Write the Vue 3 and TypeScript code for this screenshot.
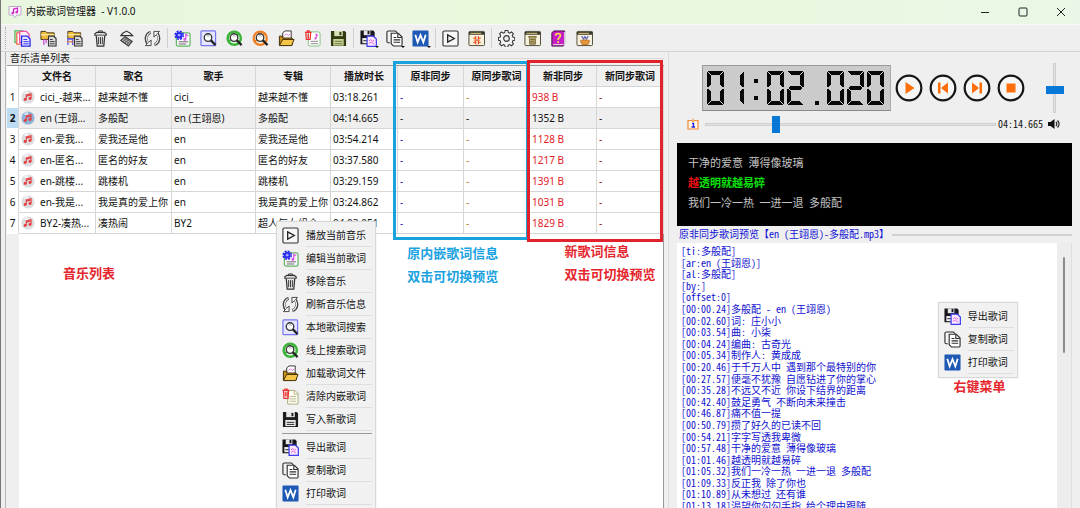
<script setup lang="ts">
import { ref } from 'vue'

interface Track {
  file: string
  title: string
  singer: string
  album: string
  duration: string
  size: string
}
interface Tool { icon: string; label: string; gap?: boolean }

const tools: Tool[] = [
  { icon: 'docs', label: '添加音乐' },
  { icon: 'folder-pink', label: '添加目录' },
  { icon: 'folder-blue', label: '添加多级目录' },
  { icon: 'trash', label: '移除音乐' },
  { icon: 'sweep', label: '清空列表' },
  { icon: 'refresh', label: '刷新音乐信息' },
  { icon: 'edit', label: '编辑当前歌词', gap: true },
  { icon: 'find-local', label: '本地歌词搜索' },
  { icon: 'find-green', label: '线上搜索歌词' },
  { icon: 'find-orange', label: '批量搜索歌词' },
  { icon: 'open', label: '加载歌词文件' },
  { icon: 'clear', label: '清除内嵌歌词' },
  { icon: 'save-olive', label: '写入新歌词' },
  { icon: 'export', label: '导出歌词', gap: true },
  { icon: 'copy', label: '复制歌词' },
  { icon: 'word', label: '打印歌词' },
  { icon: 'play-box', label: '播放当前音乐', gap: true },
  { icon: 'win-split', label: '布局' },
  { icon: 'gear', label: '设置', gap: true },
  { icon: 'win-log', label: '日志' },
  { icon: 'help', label: '帮助' },
  { icon: 'win-about', label: '关于' },
]
const dropdowns = ['export', 'copy', 'word']

const headers = ['文件名', '歌名', '歌手', '专辑', '播放时长', '原非同步', '原同步歌词', '新非同步', '新同步歌词']

const tracks: Track[] = [
  { file: 'cici_-越来...', title: '越来越不懂', singer: 'cici_', album: '越来越不懂', duration: '03:18.261', size: '938 B' },
  { file: 'en (王翊...', title: '多般配', singer: 'en (王翊恩)', album: '多般配', duration: '04:14.665', size: '1352 B' },
  { file: 'en-爱我...', title: '爱我还是他', singer: 'en', album: '爱我还是他', duration: '03:54.214', size: '1128 B' },
  { file: 'en-匿名...', title: '匿名的好友', singer: 'en', album: '匿名的好友', duration: '03:37.580', size: '1217 B' },
  { file: 'en-跳楼...', title: '跳楼机', singer: 'en', album: '跳楼机', duration: '03:29.159', size: '1391 B' },
  { file: 'en-我是...', title: '我是真的爱上你', singer: 'en', album: '我是真的爱上你', duration: '03:24.862', size: '1031 B' },
  { file: 'BY2-凑热...', title: '凑热闹', singer: 'BY2', album: '超人气女组合', duration: '04:03.051', size: '1829 B' },
]
const selected = ref(1)

const songMenu = [
  { icon: 'play-box', label: '播放当前音乐' },
  { icon: 'edit', label: '编辑当前歌词' },
  { icon: 'trash', label: '移除音乐' },
  { icon: 'refresh', label: '刷新音乐信息' },
  { icon: 'find-local', label: '本地歌词搜索' },
  { icon: 'find-green', label: '线上搜索歌词' },
  { icon: 'open', label: '加载歌词文件' },
  { icon: 'clear-doc', label: '清除内嵌歌词' },
  { icon: 'save', label: '写入新歌词' },
]
const lyricMenu = [
  { icon: 'export', label: '导出歌词' },
  { icon: 'copy', label: '复制歌词' },
  { icon: 'word', label: '打印歌词' },
]

const controls = [
  { icon: 'c-play', label: '播放' },
  { icon: 'c-prev', label: '上一首' },
  { icon: 'c-next', label: '下一首' },
  { icon: 'c-stop', label: '停止' },
]

/* Bars of a seven-segment cell, 17 x 34 units: [x, y, width, height] */
type Bar = [number, number, number, number]
const segments: Record<string, Bar[]> = {
  a: [[1, 0, 15, 1], [2, 1, 13, 1], [3, 2, 11, 1], [4, 3, 9, 1]],
  b: [[16, 1, 1, 15], [15, 2, 1, 14], [14, 3, 1, 12], [13, 4, 1, 10]],
  c: [[16, 18, 1, 15], [15, 18, 1, 14], [14, 19, 1, 12], [13, 20, 1, 10]],
  d: [[1, 33, 15, 1], [2, 32, 13, 1], [3, 31, 11, 1], [4, 30, 9, 1]],
  e: [[0, 18, 1, 15], [1, 18, 1, 14], [2, 19, 1, 12], [3, 20, 1, 10]],
  f: [[0, 1, 1, 15], [1, 2, 1, 14], [2, 3, 1, 12], [3, 4, 1, 10]],
  g: [[3, 15, 11, 1], [2, 16, 13, 2], [3, 18, 11, 1]],
}
const lit: Record<string, string> = { '0': 'abcdef', '1': 'bc', '2': 'abdeg' }
const clock = '01:02.020'
function bars(ch: string): Bar[] {
  if (ch === ':') return [[7, 8, 4, 4], [7, 25, 4, 4]]
  if (ch === '.') return [[8, 30, 4, 4]]
  return [...(lit[ch] ?? '')].flatMap((s) => segments[s])
}

const position = ref(60)
const volume = ref(46)

const lyrics = ref(`[ti:多般配]
[ar:en (王翊恩)]
[al:多般配]
[by:]
[offset:0]
[00:00.24]多般配 - en (王翊恩)
[00:02.60]词: 庄小小
[00:03.54]曲: 小柒
[00:04.24]编曲: 古奇光
[00:05.34]制作人: 黄成成
[00:20.46]于千万人中 遇到那个最特别的你
[00:27.57]便毫不犹豫 自愿钻进了你的掌心
[00:35.28]不远又不近 你设下结界的距离
[00:42.40]鼓足勇气 不断向未来撞击
[00:46.87]痛不值一提
[00:50.79]攒了好久的已读不回
[00:54.21]字字写透我卑微
[00:57.48]干净的爱意 薄得像玻璃
[01:01.46]越透明就越易碎
[01:05.32]我们一冷一热 一进一退 多般配
[01:09.33]反正我 除了你也
[01:10.89]从未想过 还有谁
[01:13.18]渴望你勾勾手指 给个理由跟随`)
</script>

<template>
  <svg class="sprite" aria-hidden="true">
    <defs>
      <symbol id="logo" viewBox="0 0 14 14">
        <path d="M1 1.500H13V10H9L7 12.500L5 10H1Z" fill="#fdf6ff" stroke="#b9a9c4" />
        <path d="M5.500 8V4L9.500 3V7" fill="none" stroke="#d22bd0" stroke-width="1.300" />
        <circle cx="4.700" cy="8" r="1.300" fill="#d22bd0" /><circle cx="8.700" cy="7.200" r="1.300" fill="#d22bd0" />
      </symbol>
      <symbol id="docs" viewBox="0 0 18 18">
        <path d="M2.500 13H1V1H10" fill="none" stroke="#4fb84f" stroke-width="1.300" />
        <path d="M3 3H11V15H3Z" fill="#fff" stroke="#f0624a" stroke-width="1.300" />
        <path d="M6 1.500H13L16 4.500V13H6Z" fill="#ffeef8" stroke="#f04fa4" stroke-width="1.300" />
        <path d="M8 6.500H14L17 9.500V17H8Z" fill="#e8e8ff" stroke="#2a2af0" stroke-width="1.400" />
        <path d="M10 10H14M10 12.300H15.500M10 14.600H15.500" stroke="#2a2af0" />
      </symbol>
      <symbol id="mini-doc" viewBox="0 0 18 18">
        <path d="M9 6.500H14.500L17 9V17H9Z" fill="#ddd" stroke="#333" stroke-width="1.200" />
        <path d="M10.500 10H13.500M10.500 12.300H15.500M10.500 14.600H15.500" stroke="#333" />
      </symbol>
      <symbol id="folder-pink" viewBox="0 0 18 18">
        <path d="M1 1.500H6L7.500 3H15V10H1Z" fill="#f0bd3a" stroke="#443311" />
        <path d="M1 5H15" stroke="#fbe49a" stroke-width="1.500" />
        <path d="M4 10V16M6.500 10V14" stroke="#d05fd8" stroke-width="1.500" />
        <use href="#mini-doc" />
      </symbol>
      <symbol id="folder-blue" viewBox="0 0 18 18">
        <path d="M2 1.500H7L8.500 3H15.500V9H2Z" fill="#f0bd3a" stroke="#443311" />
        <path d="M2 5H15.500" stroke="#fbe49a" stroke-width="1.500" />
        <path d="M2 16V9.500H7V16" fill="none" stroke="#5b5be8" stroke-width="1.400" />
        <path d="M1 12.500H8" stroke="#e67a3c" stroke-width="1.300" />
        <use href="#mini-doc" />
      </symbol>
      <symbol id="trash" viewBox="0 0 18 18">
        <path d="M3 5.500V4L5 2.500H13L15 4V5.500Z" fill="#ddd" stroke="#333" stroke-width="1.200" />
        <path d="M7 2.500V1H11V2.500" fill="none" stroke="#333" />
        <path d="M4.500 6L5.500 17H12.500L13.500 6" fill="#e8e8e8" stroke="#333" stroke-width="1.300" />
        <path d="M7 7.500V15M9 7.500V15M11 7.500V15" stroke="#333" />
      </symbol>
      <symbol id="sweep" viewBox="0 0 18 18">
        <path d="M3 6L5 3.500L9 1.200L13 3.500L15.500 6Z" fill="#eee" stroke="#333" stroke-width="1.200" />
        <path d="M7.500 7L15 12L11 17L3 11Z" fill="#bbb" stroke="#333" stroke-width="1.200" />
        <path d="M6 10L12 14.500M7.500 8.500L13.500 13M9.500 8.500L5 12.500M11.500 10L7 14M13.500 11L9 15.500" stroke="#444" stroke-width="0.800" />
      </symbol>
      <symbol id="refresh" viewBox="0 0 18 18">
        <path d="M7 2.500C2 4 1 10 4 14M11 15.500C16 14 17 8 14 4" fill="none" stroke="#444" stroke-width="3.200" />
        <path d="M1.500 16.500H7.500V10.500ZM16.500 1.500H10.500V7.500Z" fill="#f4f4f4" stroke="#444" stroke-linejoin="round" />
        <path d="M6.700 2.700C2.500 4.500 1.500 10 4.300 14M11.300 15.300C15.500 13.500 16.500 8 13.700 4" fill="none" stroke="#f4f4f4" stroke-width="1.300" />
      </symbol>
      <symbol id="edit" viewBox="0 0 18 18">
        <rect x="2.500" y="3" width="14.500" height="14" rx="2" fill="#fbf7ff" stroke="#62b862" stroke-width="1.300" />
        <path d="M12.500 9.500V4.500L15 6" fill="none" stroke="#d94fe0" stroke-width="1.300" /><circle cx="11.500" cy="10" r="1.500" fill="#d94fe0" />
        <path d="M5 12.500H15M5 14.800H13" stroke="#666" />
        <circle cx="5.500" cy="5.500" r="3.500" fill="#2727ef" />
        <circle cx="5.500" cy="5.500" r="4.300" fill="none" stroke="#2727ef" stroke-width="1.600" stroke-dasharray="2.200 1.177" />
        <circle cx="5.500" cy="5.500" r="1.500" fill="#9da6ff" />
      </symbol>
      <symbol id="lens" viewBox="0 0 18 18">
        <circle cx="8.500" cy="8" r="4" fill="#fff" stroke="#333" stroke-width="1.400" />
        <path d="M7 6.500C8 5.500 9.500 6 10 7" fill="none" stroke="#999" />
        <path d="M11.500 11L16.500 16" stroke="#222" stroke-width="2.400" />
      </symbol>
      <symbol id="find-local" viewBox="0 0 18 18"><rect x="1" y="1" width="15.500" height="15.500" rx="1" fill="#e5e5ff" stroke="#7777ee" stroke-width="1.300" /><use href="#lens" /></symbol>
      <symbol id="find-green" viewBox="0 0 18 18"><circle cx="8.700" cy="8.700" r="7" fill="#e4f8df" stroke="#37b437" stroke-width="2.600" /><path d="M3 12L14 4" stroke="#37b437" stroke-width="2" /><use href="#lens" /></symbol>
      <symbol id="find-orange" viewBox="0 0 18 18"><circle cx="8.700" cy="8.700" r="7" fill="#fdeedd" stroke="#ef7f22" stroke-width="2.300" /><path d="M3 12L14 4" stroke="#ef7f22" stroke-width="2" /><use href="#lens" /></symbol>
      <symbol id="open" viewBox="0 0 18 18">
        <path d="M5 8V3L7.500 1H14V9H5Z" fill="#fff" stroke="#333" />
        <path d="M7 6L9 4L11 6L13 4" fill="none" stroke="#e06be0" />
        <path d="M1.500 16V6.500H5V8.500H15V16Z" fill="#c98d16" stroke="#3d2b05" />
        <path d="M1.500 16.500L5 10H17L14.500 16.500Z" fill="#f4c648" stroke="#3d2b05" />
      </symbol>
      <symbol id="clear" viewBox="0 0 18 18">
        <rect x="4.500" y="2" width="12.500" height="15" rx="2" fill="#fff" stroke="#7fbf7f" />
        <path d="M13 8.500V4.500L15 6" fill="none" stroke="#d94fe0" stroke-width="1.200" /><circle cx="12.200" cy="9" r="1.200" fill="#d94fe0" />
        <path d="M7 12H15M7 14.500H15" stroke="#888" />
        <path d="M1 2.500H8M3.500 2V1H5.500V2M2 3L2.500 10H6.500L7 3M4.500 4V9" fill="none" stroke="#ee3131" stroke-width="1.300" />
      </symbol>
      <symbol id="clear-doc" viewBox="0 0 18 18">
        <path d="M6 2.500H13.500L17 6V17H6Z" fill="#fdfdf0" stroke="#a9a97a" />
        <path d="M13 2.500V6.500H17M8 9H15M8 11.500H15M8 14H15" fill="none" stroke="#b5b58c" />
        <path d="M0.500 2.500H8M3 2V1H5.500V2M1.500 3L2 11H6.500L7 3M3.500 4V9M5.300 4V9" fill="none" stroke="#ee3131" stroke-width="1.200" />
      </symbol>
      <symbol id="save-olive" viewBox="0 0 18 18"><path d="M1 1H15.500L17 2.500V17H1Z" fill="#303b12" /><rect x="4.500" y="1" width="9" height="5.500" fill="#d9dfb8" /><rect x="10" y="2" width="2" height="3.500" fill="#303b12" /><rect x="3.500" y="9.500" width="11" height="7" fill="#c8d394" /><path d="M5 12H13M5 14.500H13" stroke="#66763a" /></symbol>
      <symbol id="save" viewBox="0 0 18 18"><path d="M1 1H15.500L17 2.500V17H1Z" fill="#1c1c1c" /><rect x="4.500" y="1" width="9" height="5.500" fill="#e8e8e8" /><rect x="10" y="2" width="2" height="3.500" fill="#1c1c1c" /><rect x="3.500" y="9.500" width="11" height="6.500" fill="#eee" /><path d="M5 12H13M5 14.200H13" stroke="#222" /></symbol>
      <symbol id="export" viewBox="0 0 18 18">
        <path d="M0.500 0.500H14L15.500 2V15H0.500Z" fill="#16161c" /><rect x="4" y="0.500" width="7" height="5" fill="#e8e8e8" /><rect x="8" y="1" width="2" height="3.500" fill="#16161c" /><rect x="2.500" y="8.500" width="6" height="5.500" fill="#eee" /><path d="M3.500 11.300H8" stroke="#222" />
        <path d="M7.500 6.500H14L17.300 9.500V17.300H7.500Z" fill="#fce9ff" stroke="#3c3cf0" stroke-width="1.300" />
        <path d="M9.500 11.500L11.500 10L13 12L15 11M9.500 14L12 13L15 15" fill="none" stroke="#ea67e2" />
      </symbol>
      <symbol id="copy" viewBox="0 0 18 18">
        <path d="M4 13.500H2.500C1.500 13.500 1 13 1 12V2.500C1 1.500 1.500 1 2.500 1H10L12 3" fill="#f4f4f4" stroke="#2c2c2c" stroke-width="1.200" />
        <path d="M5.500 3.500H13L17 7.500V15.500C17 16.500 16.500 17 15.500 17H8L5.500 14.500Z" fill="#fff" stroke="#2c2c2c" stroke-width="1.200" />
        <path d="M12.500 4V8H16.500M8 8H11M8 10.500H15M8 13H15" fill="none" stroke="#2c2c2c" stroke-width="1.200" />
      </symbol>
      <symbol id="word" viewBox="0 0 18 18"><rect x="0.500" y="0.500" width="17" height="17" rx="1" fill="#1d59b5" /><path d="M3.500 5L6 13L9 5.500L12 13L14.500 5" fill="none" stroke="#fff" stroke-width="1.900" /></symbol>
      <symbol id="play-box" viewBox="0 0 18 18"><rect x="1" y="1" width="16" height="16" rx="1.500" fill="#f7f7f7" stroke="#333" stroke-width="1.200" /><path d="M6 5.200L13 9L6 12.800Z" fill="none" stroke="#222" stroke-width="1.400" /></symbol>
      <symbol id="win" viewBox="0 0 18 18"><rect x="1" y="1.500" width="16.500" height="15" rx="1" fill="#f6f1dc" stroke="#4b4735" /><path d="M1 3.500H17.500" stroke="#37352a" stroke-width="3" /><path d="M2.500 3.500H14" stroke="#e9d983" /></symbol>
      <symbol id="win-split" viewBox="0 0 18 18"><use href="#win" /><path d="M8 6.500V15M11 6.500V15" stroke="#f0452a" stroke-width="1.400" stroke-dasharray="3.500 1.500" /><path d="M5.500 8.500L8 8.500M5.500 13H8M13.500 8.500H11M13.500 13H11M6.500 10.700H12.500" stroke="#f0652a" stroke-width="1.300" /></symbol>
      <symbol id="win-log" viewBox="0 0 18 18"><use href="#win" /><path d="M5 7H13V8L12 9V15H6V9L5 8Z" fill="#b5a468" stroke="#726336" /><path d="M7 10H11M7 12.500H11" stroke="#726336" /></symbol>
      <symbol id="win-about" viewBox="0 0 18 18"><use href="#win" /><path d="M6 6.500L8 9.500L9.500 7L11 9.500L13 6.500" stroke="#555fc4" stroke-width="1.300" fill="none" /><path d="M4.500 11.500L7 10.500H12L14.500 11.500L12.500 15.500H6.500Z" fill="#e8963a" stroke="#a75c14" stroke-width="0.700" /></symbol>
      <symbol id="gear" viewBox="0 0 18 18">
        <path d="M7.600 1h2.800l.5 2.200 1.500.6 1.900-1.200 2 2-1.200 1.900.6 1.500 2.100.5v2.800l-2.100.5-.6 1.500 1.200 1.900-2 2-1.900-1.200-1.500.6-.5 2.100H7.600l-.5-2.100-1.500-.6-1.900 1.200-2-2 1.200-1.900-.6-1.500L.4 11.300V8.500L2.300 8l.6-1.500-1.200-1.900 2-2 1.900 1.200 1.500-.6Z" transform="translate(0 -0.500)" fill="#f5f5f5" stroke="#333" stroke-width="1.100" />
        <circle cx="9" cy="9" r="3" fill="#eee" stroke="#333" stroke-width="1.200" />
      </symbol>
      <symbol id="help" viewBox="0 0 18 18"><path d="M2 3L4 1H15.500V15L14 17H2Z" fill="#c41fc4" stroke="#3c0a3c" /><path d="M15.500 2V16M3 15.500H14.500" stroke="#eee" /><path d="M6 6C6 3 11 3 11 6C11 8 8.500 8 8.500 10.500M8.500 12V13.700" fill="none" stroke="#ffe24a" stroke-width="1.700" /></symbol>
      <symbol id="disc" viewBox="0 0 16 16"><circle class="disc-plate" cx="8" cy="8" r="7.500" /><path d="M3 3.500A7 7 0 0 1 8 1V6Z" fill="#fff" opacity="0.600" /><path d="M6 10.500V5.500L11.500 4.200V9.500M6 7L11.500 5.700" fill="none" stroke="#e83a3a" stroke-width="1.200" /><circle cx="4.800" cy="10.800" r="1.700" fill="#e83a3a" /><circle cx="10.300" cy="9.800" r="1.700" fill="#e83a3a" /></symbol>
      <symbol id="ring" viewBox="0 0 28 28"><circle cx="14" cy="14" r="12.300" fill="#f6f6f6" stroke="#151515" stroke-width="2.200" /></symbol>
      <symbol id="c-play" viewBox="0 0 28 28"><use href="#ring" /><path d="M10.500 8L19.500 14L10.500 20Z" fill="#fd6f0b" /></symbol>
      <symbol id="c-prev" viewBox="0 0 28 28"><use href="#ring" /><path d="M9 8.500H11.500V19.500H9ZM19 8.500V19.500L12 14Z" fill="#fd6f0b" /></symbol>
      <symbol id="c-next" viewBox="0 0 28 28"><use href="#ring" /><path d="M16.500 8.500H19V19.500H16.500ZM9 8.500V19.500L16 14Z" fill="#fd6f0b" /></symbol>
      <symbol id="c-stop" viewBox="0 0 28 28"><use href="#ring" /><rect x="9.500" y="9.500" width="9" height="9" fill="#fd6f0b" /></symbol>
      <symbol id="info" viewBox="0 0 12 12"><path d="M4 2.500H1V11H11V2.500H8" fill="#fff5e8" stroke="#f08a32" stroke-width="1.200" /><path d="M6 0.500V3.500M4 2L6 4L8 2" fill="none" stroke="#f08a32" /><path d="M5 5.500H6.500V9M4.500 9H8" fill="none" stroke="#2222dd" stroke-width="1.300" /></symbol>
      <symbol id="speaker" viewBox="0 0 14 12"><path d="M1 4H3.500L7.500 1V11L3.500 8H1Z" fill="#111" /><path d="M9 4C10 5 10 7 9 8M10.500 2.500C12.500 4.500 12.500 7.500 10.500 9.500" fill="none" stroke="#222" stroke-width="1.300" /></symbol>
    </defs>
  </svg>

  <div class="window">
    <header class="titlebar">
      <svg class="logo"><use href="#logo" /></svg>
      <h1>内嵌歌词管理器&nbsp; - V1.0.0</h1>
      <div class="win-controls">
        <button type="button" aria-label="最小化"><svg viewBox="0 0 10 10"><path d="M1 5.500H9" /></svg></button>
        <button type="button" aria-label="最大化"><svg viewBox="0 0 10 10"><rect x="1" y="1" width="8" height="8" rx="1" /></svg></button>
        <button type="button" aria-label="关闭"><svg viewBox="0 0 10 10"><path d="M1 1L9 9M9 1L1 9" /></svg></button>
      </div>
    </header>

    <nav class="toolbar" aria-label="工具栏">
      <span class="grip"></span>
      <template v-for="t in tools" :key="t.icon">
        <span v-if="t.gap" class="divider"></span>
        <button type="button" class="tool" :class="{ drop: dropdowns.includes(t.icon) }" :aria-label="t.label">
          <svg><use :href="'#' + t.icon" /></svg>
        </button>
      </template>
    </nav>

    <main class="body">
      <section class="list-pane">
        <h2 class="group-title">音乐清单列表</h2>
        <div class="table-area">
          <table>
            <colgroup>
              <col class="w-no" /><col class="w-file" /><col class="w-song" /><col class="w-singer" /><col class="w-album" /><col class="w-time" />
              <col class="w-info" /><col class="w-info" /><col class="w-new" /><col class="w-new" />
            </colgroup>
            <thead>
              <tr><td class="corner"></td><th v-for="h in headers" :key="h" scope="col">{{ h }}</th></tr>
            </thead>
            <tbody>
              <tr v-for="(t, i) in tracks" :key="t.file" :class="{ selected: i === selected }" @click="selected = i">
                <th scope="row">{{ i + 1 }}</th>
                <td><span class="file"><svg class="disc"><use href="#disc" /></svg>{{ t.file }}</span></td>
                <td>{{ t.title }}</td>
                <td>{{ t.singer }}</td>
                <td>{{ t.album }}</td>
                <td>{{ t.duration }}</td>
                <td class="navy">-</td>
                <td class="amber">-</td>
                <td class="red">{{ t.size }}</td>
                <td class="maroon">-</td>
              </tr>
            </tbody>
          </table>
          <div class="mark mark-old"></div>
          <div class="mark mark-new"></div>
          <p class="note note-list">音乐列表</p>
          <p class="note note-old">原内嵌歌词信息<br />双击可切换预览</p>
          <p class="note note-new">新歌词信息<br />双击可切换预览</p>
          <div class="menu menu-song" role="menu">
            <button v-for="m in songMenu" :key="m.label" type="button" role="menuitem"><svg><use :href="'#' + m.icon" /></svg><span>{{ m.label }}</span></button>
            <hr />
            <button v-for="m in lyricMenu" :key="m.label" type="button" role="menuitem"><svg><use :href="'#' + m.icon" /></svg><span>{{ m.label }}</span></button>
          </div>
        </div>
      </section>

      <section class="player-pane">
        <div class="player">
          <div class="lcd" role="img" :aria-label="clock">
            <svg v-for="(ch, i) in clock" :key="i" viewBox="0 0 20 34" class="cell">
              <rect v-for="(b, k) in bars(ch)" :key="k" :x="b[0]" :y="b[1]" :width="b[2]" :height="b[3]" />
            </svg>
          </div>
          <div class="controls">
            <button v-for="c in controls" :key="c.icon" type="button" :aria-label="c.label"><svg><use :href="'#' + c.icon" /></svg></button>
          </div>
          <input v-model.number="volume" class="volume" type="range" min="0" max="100" aria-label="音量" />
        </div>
        <div class="seek">
          <svg class="info"><use href="#info" /></svg>
          <input v-model.number="position" type="range" min="0" max="254" aria-label="播放进度" />
          <span class="total">04:14.665</span>
          <svg class="speaker"><use href="#speaker" /></svg>
        </div>
        <div class="karaoke">
          <p>干净的爱意 薄得像玻璃</p>
          <p class="now"><em>越</em>透明就越易碎</p>
          <p>我们一冷一热 一进一退 多般配</p>
        </div>
        <div class="preview-title"><label for="lyrics">原非同步歌词预览【en (王翊恩)-多般配.mp3】</label><span class="rule"></span></div>
        <div class="preview">
          <textarea id="lyrics" v-model="lyrics" readonly wrap="off"></textarea>
          <span class="scroll"><i></i></span>
          <div class="menu menu-lyric" role="menu">
            <button v-for="m in lyricMenu" :key="m.label" type="button" role="menuitem"><svg><use :href="'#' + m.icon" /></svg><span>{{ m.label }}</span></button>
          </div>
          <p class="note note-menu">右键菜单</p>
        </div>
      </section>
    </main>
  </div>
</template>

<style>
body { margin: 0; overflow: hidden; }
</style>

<style scoped>
* { box-sizing: border-box; }
p, h1, h2 { margin: 0; font-weight: 400; }
button { border: 0; padding: 0; background: none; font: inherit; color: inherit; display: flex; align-items: center; }
.sprite { position: absolute; width: 0; height: 0; }
.window {
  display: flex; flex-direction: column; height: 100vh; overflow: hidden;
  background: #efefef; color: #111; border-left: 1px solid #777;
  font: 10px/14px "Noto Sans", "Noto Sans CJK SC", sans-serif;
}
.titlebar { display: flex; align-items: center; height: 24px; flex: none; padding-left: 7px; background: linear-gradient(90deg, #e8f6e0, #eaf8dc 45%, #e9f7e6); }
.logo { width: 14px; height: 14px; }
h1 { font-size: 10px; line-height: 14px; margin: 0 0 2px 4px; flex: 1; }
.win-controls { display: flex; }
.win-controls button { width: 38px; height: 22px; justify-content: center; }
.win-controls svg { width: 10px; height: 10px; fill: none; stroke: #222; }

.toolbar { display: flex; align-items: center; height: 28px; flex: none; padding-left: 4px; border-bottom: 1px solid #d2d2d2; border-top: 1px solid #f8f8f8; }
.grip { width: 4px; height: 22px; border-left: 1px dotted #aaa; }
.tool { position: relative; width: 26px; height: 26px; justify-content: center; }
.tool svg { width: 17px; height: 17px; }
.drop::after { content: ""; position: absolute; right: 2px; bottom: 3px; border: 2px solid transparent; border-top-color: #111; border-bottom: 0; }
.divider { width: 1px; height: 20px; margin: 0 1px 0 2px; background: #cfcfcf; }

.body { flex: 1; min-height: 0; display: grid; grid-template-columns: minmax(0, 663fr) minmax(0, 416fr); }
.list-pane { display: flex; flex-direction: column; min-width: 0; margin-left: 4px; border-left: 1px solid #b9b9b9; padding-left: 1px; }
.group-title { display: flex; align-items: center; gap: 3px; height: 13px; font-size: 10px; line-height: 13px; padding-left: 3px; }
.group-title::after { content: ""; flex: 1; height: 1px; background: #d9d9d9; }
.table-area { position: relative; flex: 1; min-height: 0; border-top: 1px solid #999; border-right: 1px solid #999; background: linear-gradient(90deg, #efefef 12px, #fff 12px); }
table { width: 100%; table-layout: fixed; border-collapse: separate; border-spacing: 0; }
.w-no { width: 12px; } .w-file { width: 77px; } .w-song { width: 76px; } .w-singer { width: 84px; } .w-album { width: 75px; }
.w-time { width: 67px; } .w-info { width: 66px; } .w-new { width: 67px; }
td, th { height: 21px; padding: 0 0 0 2px; border-right: 1px solid #d6d6d6; border-bottom: 1px solid #d6d6d6; white-space: nowrap; overflow: hidden; text-align: left; background: #fff; line-height: 14px; }
thead th { background: #f0f0f0; text-align: center; font-weight: 700; padding: 0; }
tbody th { font-weight: 400; text-align: center; padding: 0; border-bottom-color: #fff; }
thead .corner { border-bottom-color: #fff; }
.selected td { background: #efefef; }
.selected th { background: #bcdcf4; font-weight: 700; }
.file { display: flex; align-items: center; gap: 5px; }
.disc { width: 14px; height: 14px; flex: none; fill: #dcdde1; }
.selected .disc { fill: #8fb2d6; }
.navy { color: #1a1ab5; } .amber { color: #b98325; } .red { color: #e3201f; } .maroon { color: #7a1a2a; }
.selected .navy, .selected .amber, .selected .red, .selected .maroon { color: #111; }

.mark { position: absolute; border: 3px solid; }
.mark-old { left: 58.8%; width: 20.7%; top: -5px; height: 179px; color: #18a3dc; }
.mark-new { right: 0; width: 20.7%; top: -6px; height: 182px; color: #e0232b; }
.note { position: absolute; font: 700 13px/23px "Noto Sans CJK SC", sans-serif; color: #e5262d; white-space: nowrap; }
.note-list { left: 56px; top: 195px; }
.note-old { left: 61%; top: 175px; color: #1ba2e0; }
.note-new { left: 85%; top: 173px; }

.menu { position: absolute; background: #f1f1f1; border: 1px solid #d8d8d8; padding: 2px 3px 3px 5px; box-shadow: 0 0 1px #ccc; }
.menu button { width: 100%; height: 23px; gap: 7px; }
.menu svg { width: 17px; height: 17px; flex: none; }
.menu span { flex: 1; height: 23px; line-height: 22px; border-bottom: 1px solid #dedede; text-align: left; white-space: nowrap; }
.menu hr { border: 0; height: 1px; margin: 2px 0; background: #999; }
.menu-song { left: 41%; top: 155px; width: 100px; }
.menu-lyric { left: 66%; top: 59px; width: 80px; }

.player-pane { display: flex; flex-direction: column; min-width: 0; margin-left: 4px; padding: 0 8px 0 8px; border-left: 1px solid #dcdcdc; font-family: "Noto Sans Mono CJK SC", "Noto Sans CJK SC", monospace; }
.player { display: flex; align-items: center; justify-content: flex-end; margin-top: 10px; height: 52px; }
.lcd { display: flex; padding: 5px 3px 5px 4px; background: #cbcbcb; border: 1px solid; border-color: #999 #aaa #888 #999; }
.cell { width: 20px; height: 34px; fill: #080808; }
.controls { display: flex; gap: 6px; margin-left: 4px; }
.controls button, .controls svg { width: 28px; height: 28px; }
input { appearance: none; margin: 0; background: none; }
.volume { writing-mode: vertical-lr; direction: rtl; width: 18px; height: 50px; margin: 0 9px 0 20px; }
.volume::-webkit-slider-runnable-track { width: 3px; height: 100%; background: #e3e3e3; border: 1px solid #cfcfcf; }
.volume::-webkit-slider-thumb { appearance: none; width: 18px; height: 8px; margin-left: -8px; background: #0878d8; }
.seek { display: flex; align-items: center; height: 20px; padding-left: 10px; }
.info { width: 12px; height: 12px; margin-right: 6px; }
.seek input { flex: 1; min-width: 0; height: 18px; }
.seek input::-webkit-slider-runnable-track { height: 3px; background: #e3e3e3; border: 1px solid #cfcfcf; }
.seek input::-webkit-slider-thumb { appearance: none; width: 8px; height: 17px; margin-top: -8px; background: #0878d8; }
.total { margin: 0 4px 0 2px; }
.speaker { width: 14px; height: 12px; margin-right: 11px; }
.karaoke { margin-top: 9px; height: 83px; padding: 9px 11px; background: #000; color: #c4c4c4; font-size: 11px; line-height: 20px; }
.karaoke .now { color: #0be00b; font-weight: 700; }
.karaoke em { color: #e81010; font-style: normal; }
.preview-title { display: flex; align-items: center; gap: 3px; height: 17px; padding-left: 2px; color: #1111d8; }
.preview-title label { margin-bottom: 2px; }
.rule { flex: 1; height: 2px; background: #d2d2d2; }
.preview { position: relative; display: flex; flex: 1; min-height: 0; }
textarea { flex: 1; min-width: 0; border: 0; margin: 0; padding: 2px 4px 0; resize: none; outline: 0; overflow: hidden; background: #fff; color: #1111d0; font: inherit; line-height: 1.16; }
.scroll { width: 15px; padding: 14px 0 0 6px; background: #ededed; border-right: 1px solid #dedede; }
.scroll i { display: block; width: 2px; height: 96px; background: #8c8c8c; border-radius: 1px; }
.note-menu { left: 70%; top: 131px; }
</style>
